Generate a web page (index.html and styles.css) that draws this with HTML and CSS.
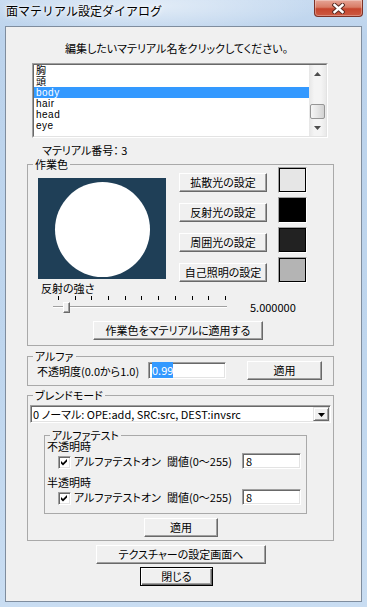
FILE: index.html
```html
<!DOCTYPE html>
<html lang="ja">
<head>
  <meta charset="UTF-8">
  <meta name="viewport" content="width=device-width, initial-scale=1">
  <title>面マテリアル設定ダイアログ</title>
  <link rel="stylesheet" href="styles.css">
</head>
<body>
  <div class="window">

    <!-- Title bar -->
    <div class="titlebar">
      <span class="title">面マテリアル設定ダイアログ</span>
      <div class="close-box">
        <svg width="13" height="11" viewBox="0 0 13 11">
          <path d="M2.5 2 L10.5 9 M10.5 2 L2.5 9" stroke="#5a2c24" stroke-width="4.4" stroke-linecap="square" fill="none"/>
          <path d="M2.5 2 L10.5 9 M10.5 2 L2.5 9" stroke="#fff" stroke-width="2.4" stroke-linecap="square" fill="none"/>
        </svg>
      </div>
    </div>

    <!-- Client area -->
    <div class="client">
      <p class="prompt">編集したいマテリアル名をクリックしてください。</p>

      <div class="listbox">
        <div class="listbox-inner">
          <ul class="items">
            <li>胸</li>
            <li>頭</li>
            <li class="selected">body</li>
            <li>hair</li>
            <li>head</li>
            <li>eye</li>
          </ul>
          <div class="scrollbar">
            <div class="sb-btn">
              <svg width="7" height="4" viewBox="0 0 7 4"><polygon points="3.5,0 7,4 0,4" fill="#4d4d4d"/></svg>
            </div>
            <div class="sb-track"><div class="sb-thumb"></div></div>
            <div class="sb-btn">
              <svg width="7" height="4" viewBox="0 0 7 4"><polygon points="0,0 7,0 3.5,4" fill="#4d4d4d"/></svg>
            </div>
          </div>
        </div>
      </div>

      <p class="matno">マテリアル番号： 3</p>

      <!-- 作業色 -->
      <div class="group work">
        <div class="group-title">作業色</div>
        <div class="work-row">
          <div class="preview">
            <svg width="128" height="101" viewBox="0 0 128 101">
              <circle cx="64.5" cy="51.5" r="47.5" fill="#fff"/>
            </svg>
          </div>
          <div class="light-grid">
            <button class="btn">拡散光の設定</button>
            <span class="swatch diffuse"></span>
            <button class="btn">反射光の設定</button>
            <span class="swatch specular"></span>
            <button class="btn">周囲光の設定</button>
            <span class="swatch ambient"></span>
            <button class="btn">自己照明の設定</button>
            <span class="swatch emissive"></span>
          </div>
        </div>
        <p class="strength-label">反射の強さ</p>
        <div class="slider-row">
          <div class="slider">
            <div class="ticks">
              <i></i><i></i><i></i><i></i><i></i><i></i><i></i><i></i><i></i><i></i><i></i>
            </div>
            <div class="track"><span class="knob"></span></div>
          </div>
          <span class="slider-value">5.000000</span>
        </div>
        <button class="btn apply-work">作業色をマテリアルに適用する</button>
      </div>

      <!-- アルファ -->
      <div class="group alpha">
        <div class="group-title">アルファ</div>
        <div class="alpha-row">
          <span class="alpha-label">不透明度(0.0から1.0)</span>
          <div class="field alpha-field"><span class="sel">0.99</span></div>
          <button class="btn alpha-apply">適用</button>
        </div>
      </div>

      <!-- ブレンドモード -->
      <div class="group blend">
        <div class="group-title">ブレンドモード</div>
        <div class="combo">
          <span class="combo-text">0 ノーマル: OPE:add, SRC:src, DEST:invsrc</span>
          <span class="combo-btn">
            <svg width="7" height="4" viewBox="0 0 7 4"><polygon points="0,0 7,0 3.5,4" fill="#000"/></svg>
          </span>
        </div>

        <div class="group alphatest">
          <div class="group-title small">アルファテスト</div>
          <p class="sub-label">不透明時</p>
          <div class="check-row">
            <span class="checkbox">
              <svg width="7" height="7" viewBox="0 0 7 7"><polygon points="0,2 2,4 6,0 6,2.6 2,6.6 0,4.6" fill="#000"/></svg>
            </span>
            <span class="check-label">アルファテストオン</span>
            <span class="thresh-label">閾値(0〜255)</span>
            <div class="field thresh-field">8</div>
          </div>
          <p class="sub-label second">半透明時</p>
          <div class="check-row">
            <span class="checkbox">
              <svg width="7" height="7" viewBox="0 0 7 7"><polygon points="0,2 2,4 6,0 6,2.6 2,6.6 0,4.6" fill="#000"/></svg>
            </span>
            <span class="check-label">アルファテストオン</span>
            <span class="thresh-label">閾値(0〜255)</span>
            <div class="field thresh-field">8</div>
          </div>
        </div>

        <button class="btn blend-apply">適用</button>
      </div>

      <button class="btn texture">テクスチャーの設定画面へ</button>
      <button class="btn default close-dlg">閉じる</button>
    </div>
  </div>
</body>
</html>
```

FILE: styles.css
```css
* {
  box-sizing: border-box;
}

html, body {
  margin: 0;
  height: 100%;
}

body {
  font-family: "Noto Sans CJK JP", sans-serif;
  font-size: 11px;
  font-feature-settings: "palt";
  color: #000;
  background: linear-gradient(180deg, #c6daf0 0%, #bcd3ec 6%, #bfd6ee 60%, #c9ddf2 100%);
  overflow: hidden;
}

p {
  margin: 0;
}

/* Window frame */
.window {
  width: 367px;
  height: 607px;
  display: flex;
  flex-direction: column;
}

.titlebar {
  height: 26px;
  display: flex;
  justify-content: space-between;
  align-items: flex-start;
  padding-left: 6px;
  background: radial-gradient(ellipse 170px 28px at 150px 6px, rgba(255,255,255,.5), rgba(255,255,255,0));
}

.title {
  font-size: 12px;
  line-height: 14px;
  margin-top: 4px;
  font-feature-settings: normal;
  text-shadow: 0 0 6px #fff, 0 0 3px #fff;
}

.close-box {
  width: 49px;
  height: 17px;
  margin-right: 4px;
  border: 1px solid #7d3126;
  border-top: 0;
  border-radius: 0 0 4px 4px;
  background: linear-gradient(180deg, #e6a596 0%, #d87c66 45%, #c6452d 55%, #cc5a43 100%);
  box-shadow: inset 0 0 0 1px rgba(255,255,255,.3);
  display: flex;
  align-items: center;
  justify-content: center;
}

.client {
  width: 357px;
  height: 576px;
  margin-left: 5px;
  border: 1px solid #7f8d9e;
  background: #f0f0f0;
  display: flex;
  flex-direction: column;
  align-items: flex-start;
}

.prompt {
  margin: 15px 0 0 59px;
  line-height: 13px;
}

/* Material list */
.listbox {
  margin: 8px 0 0 26px;
  width: 296px;
  height: 75px;
  border: 1px solid;
  border-color: #a0a0a0 #fff #fff #a0a0a0;
}

.listbox-inner {
  height: 100%;
  display: flex;
  background: #fff;
  border: 1px solid;
  border-color: #696969 #e3e3e3 #e3e3e3 #696969;
}

.items {
  flex: 1;
  list-style: none;
  margin: 0;
  padding: 0;
  font-family: "Liberation Sans", "Noto Sans CJK JP", sans-serif;
  font-size: 10px;
  letter-spacing: 0.5px;
}

.items li {
  height: 11px;
  line-height: 11px;
  padding-left: 2px;
}

.items .selected {
  background: #3399ff;
  color: #fff;
}

.scrollbar {
  width: 17px;
  display: flex;
  flex-direction: column;
  background: linear-gradient(90deg, #e6e6e6, #f4f4f4 30%, #f4f4f4 70%, #e9e9e9);
}

.sb-btn {
  height: 17px;
  display: flex;
  align-items: center;
  justify-content: center;
}

.sb-track {
  flex: 1;
}

.sb-thumb {
  margin: 22px 0 0 1px;
  width: 15px;
  height: 15px;
  border: 1px solid #969696;
  border-radius: 2px;
  background: linear-gradient(90deg, #f6f6f6, #e6e6e6 50%, #d2d2d2);
}

.matno {
  margin: 6px 0 0 36px;
  line-height: 13px;
}

/* Group boxes */
.group {
  width: 307px;
  margin-left: 21px;
  border: 1px solid #a9a9a9;
  display: flex;
  flex-direction: column;
  align-items: flex-start;
}

.group-title {
  margin: -7px 0 -6px 5px;
  padding: 0 2px;
  line-height: 13px;
  background: #f0f0f0;
}

.group-title.small {
  margin: -6px 0 -5px 5px;
  line-height: 11px;
}

.work {
  margin-top: 7px;
  padding-bottom: 5px;
}

.work-row {
  display: flex;
  margin: 2px 0 0 10px;
}

.preview {
  margin-top: 11px;
  width: 128px;
  height: 101px;
  background: #1f3f57;
}

.preview svg {
  display: block;
}

.light-grid {
  margin-left: 13px;
  display: grid;
  grid-template-columns: 88px 29px;
  grid-auto-rows: 26px;
  column-gap: 11px;
  row-gap: 4px;
}

.light-grid .btn {
  align-self: end;
  margin-bottom: 1px;
}

.swatch {
  border: 1px solid;
  border-color: #a0a0a0 #fff #fff #a0a0a0;
  box-shadow: inset 0 0 0 1px #000;
}

.diffuse { background: #e6e6e6; }
.specular { background: #000; }
.ambient { background: #222; }
.emissive { background: #b4b4b4; }

.strength-label {
  margin: -1px 0 0 13px;
  line-height: 13px;
}

.slider-row {
  display: flex;
  margin-left: 25px;
}

.slider {
  width: 174px;
}

.ticks {
  margin: 1px 0 0 5px;
  width: 168px;
  height: 4px;
  display: flex;
  justify-content: space-between;
}

.ticks i {
  width: 1px;
  background: #000;
}

.track {
  margin-top: 2px;
  height: 11px;
  display: flex;
  background:
    linear-gradient(#a0a0a0, #a0a0a0) 0 4px / 100% 1px no-repeat,
    linear-gradient(#fff, #fff) 0 5px / 100% 1px no-repeat;
}

.knob {
  margin-left: 10px;
  width: 7px;
  height: 11px;
  background: #f0f0f0;
  border: 1px solid;
  border-color: #fff #696969 #696969 #fff;
  box-shadow: inset -1px -1px 0 #a0a0a0;
}

.slider-value {
  margin: 6px 0 0 23px;
  line-height: 13px;
}

/* Buttons */
.btn {
  font: inherit;
  color: #000;
  height: 19px;
  padding: 0;
  background: #f0f0f0;
  border: 1px solid;
  border-color: #fff #696969 #696969 #fff;
  box-shadow: inset -1px -1px 0 #a0a0a0;
  line-height: 15px;
  text-align: center;
}

.btn.default {
  border-color: #000;
  box-shadow: inset 1px 1px 0 #fff, inset -1px -1px 0 #696969, inset -2px -2px 0 #a0a0a0;
}

.apply-work {
  margin: 7px 0 0 65px;
  width: 170px;
}

/* Text fields */
.field {
  background: #fff;
  border: 1px solid;
  border-color: #a0a0a0 #fff #fff #a0a0a0;
  box-shadow: inset 1px 1px 0 #696969, inset -1px -1px 0 #e3e3e3;
  padding: 1px 0 0 3px;
  line-height: 12px;
}

/* Alpha */
.alpha {
  margin-top: 10px;
  padding-bottom: 5px;
}

.alpha-row {
  margin: 4px 0 0 9px;
  height: 19px;
  display: flex;
  align-items: center;
}

.alpha-label {
  width: 111px;
}

.alpha-field {
  width: 78px;
  height: 17px;
}

.sel {
  background: #3399ff;
  color: #fff;
}

.alpha-apply {
  margin-left: 21px;
  width: 75px;
}

/* Blend mode */
.blend {
  margin-top: 9px;
  padding-bottom: 3px;
}

.combo {
  margin: 9px 0 0 2px;
  width: 301px;
  height: 18px;
  display: flex;
  align-items: center;
  background: #fff;
  border: 1px solid;
  border-color: #a0a0a0 #fff #fff #a0a0a0;
  box-shadow: inset 1px 1px 0 #696969, inset -1px -1px 0 #e3e3e3;
  padding: 1px 1px 1px 2px;
}

.combo-text {
  flex: 1;
  line-height: 13px;
}

.combo-btn {
  width: 16px;
  height: 14px;
  display: flex;
  align-items: center;
  justify-content: center;
  padding-top: 1px;
  background: #f0f0f0;
  border: 1px solid;
  border-color: #e3e3e3 #696969 #696969 #e3e3e3;
  box-shadow: inset 1px 1px 0 #fff, inset -1px -1px 0 #a0a0a0;
}

.alphatest {
  width: 263px;
  margin: 12px 0 0 16px;
  padding-bottom: 8px;
}

.sub-label {
  margin: 5px 0 1px 2px;
  line-height: 11px;
}

.sub-label.second {
  margin-top: 8px;
}

.check-row {
  margin-left: 13px;
  height: 16px;
  display: flex;
  align-items: center;
}

.checkbox {
  width: 13px;
  height: 13px;
  margin-top: 2px;
  display: flex;
  align-items: center;
  justify-content: center;
  background: #fff;
  border: 1px solid;
  border-color: #a0a0a0 #fff #fff #a0a0a0;
  box-shadow: inset 1px 1px 0 #696969, inset -1px -1px 0 #e3e3e3;
}

.check-label {
  margin-left: 3px;
  width: 93px;
}

.thresh-label {
  width: 75px;
}

.thresh-field {
  width: 59px;
  height: 16px;
}

.blend-apply {
  margin: 4px 0 0 116px;
  width: 74px;
}

/* Bottom buttons */
.texture {
  margin: 4px 0 0 90px;
  width: 170px;
}

.close-dlg {
  margin: 3px 0 0 134px;
  width: 73px;
}
```
